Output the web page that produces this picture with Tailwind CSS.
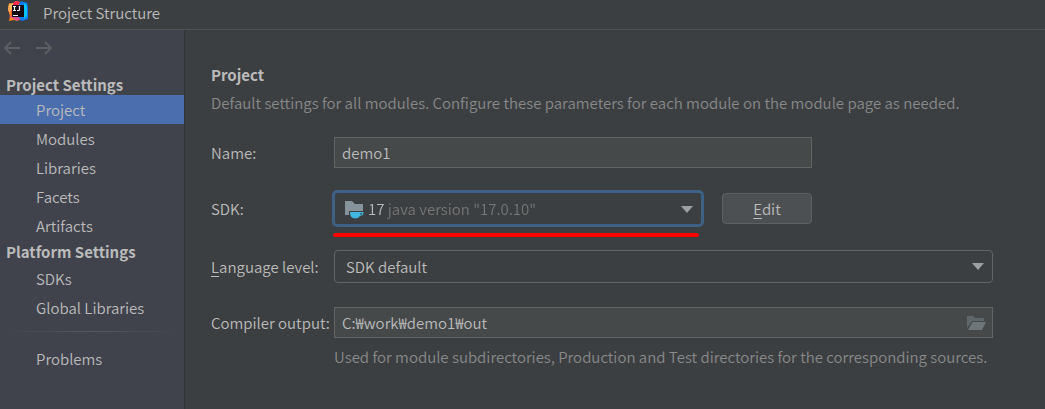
<!DOCTYPE html>
<html lang="en">
  <head>
    <meta charset="UTF-8" />
    <meta name="viewport" content="width=device-width, initial-scale=1.0" />
    <title>Project Structure</title>
    <script src="https://cdn.jsdelivr.net/npm/@tailwindcss/browser@4"></script>
  </head>
  <body
    class="flex flex-col min-h-screen bg-[#3c3f41] text-[#bbbbbb] text-[15px] leading-5 font-[350] font-['Noto_Sans_CJK_KR','Noto_Sans',sans-serif]"
  >
    <header class="flex items-center gap-[15px] h-[30px] pl-2 pb-1 border-b border-[#4f5254]">
      <svg class="w-5 h-5 shrink-0 -mt-1" viewBox="0 0 20 20" aria-hidden="true">
        <path d="M1 2 4 3 8 0l4 1v17l-3 2-3-1-5 1 1-5-2-6z" fill="#fc801d" />
        <path d="M6 1 9 0l4 2-5 3-5 7-2-2z" fill="#fe2857" />
        <path d="M1 3 5 2v5l-3 5-2-4z" fill="#fdb35a" />
        <path d="M11 3 13 0l6 2 1 4v12l-6 2-5-3z" fill="#087cfa" />
        <path d="m15 4 2-2 2 3v10l-3 3z" fill="#07c3f2" />
        <path d="m1 15 6-1 6 4-4 2z" fill="#dd4f8e" />
        <path d="M4 4h12v12H4z" fill="#150b12" />
        <path d="M5 5.500h3M6.500 5.500v4M5 9.500h3M11.500 5v3.500q0 1-1 1H9M5 14.500h5" fill="none" stroke="#fff" stroke-width="1.200" />
      </svg>
      <h1>Project Structure</h1>
    </header>

    <div class="flex flex-1">
      <aside class="w-[185px] shrink-0 bg-[#40434c] border-r border-[#323436]">
        <div class="flex gap-4 h-9 pl-[3px] items-center">
          <button type="button" aria-label="Back">
            <svg class="w-[17px] h-4" viewBox="0 0 17 16" fill="none" stroke="#5c5e61" stroke-width="2">
              <path d="M17 8H2M8 2 2 8l6 6" />
            </svg>
          </button>
          <button type="button" aria-label="Forward">
            <svg class="w-[17px] h-4" viewBox="0 0 17 16" fill="none" stroke="#5c5e61" stroke-width="2">
              <path d="M0 8h15M9 2l6 6-6 6" />
            </svg>
          </button>
        </div>
        <nav class="pt-[9px]">
          <h2 class="h-5 pl-[6px] font-bold">Project Settings</h2>
          <a href="#" class="flex items-center h-[29px] pl-9 bg-[#4b6eaf]">Project</a>
          <a href="#" class="flex items-center h-[29px] pl-9">Modules</a>
          <a href="#" class="flex items-center h-[29px] pl-9">Libraries</a>
          <a href="#" class="flex items-center h-[29px] pl-9">Facets</a>
          <a href="#" class="flex items-center h-[29px] pl-9">Artifacts</a>
          <h2 class="flex items-center h-6 pl-[6px] font-bold">Platform Settings</h2>
          <a href="#" class="flex items-center h-[29px] pl-9">SDKs</a>
          <a href="#" class="flex items-center h-[29px] pl-9">Global Libraries</a>
          <div class="h-px mt-[9px] mb-3 mx-1 bg-linear-to-r from-transparent via-[#55575b] to-transparent"></div>
          <a href="#" class="flex items-center h-[29px] pl-9">Problems</a>
        </nav>
      </aside>

      <main class="flex-1 min-w-0 pt-[35px] pl-[26px] pr-[52px]">
        <h2 class="font-bold">Project</h2>
        <p class="mt-2 text-[#87898a] whitespace-nowrap">
          Default settings for all modules. Configure these parameters for each module on the module page as needed.
        </p>

        <form class="grid grid-cols-[123px_minmax(0,1fr)] items-center mt-6">
          <label for="name">Name:</label>
          <input
            id="name"
            type="text"
            value="demo1"
            class="w-[478px] h-[31px] px-[7px] bg-[#45494a] border border-[#646464] outline-none"
          />

          <label for="sdk" class="mt-[22px]">SDK:</label>
          <div class="flex items-center gap-[18px] h-[37px] mt-[22px] -ml-[2px]">
            <div class="relative w-[372px] h-[37px] border-[3px] border-[#3d6185] rounded-[5px]">
              <select
                id="sdk"
                class="appearance-none w-full h-full pl-[33px] pr-8 outline-none text-transparent bg-clip-text bg-linear-to-r from-[#bbbbbb] from-[51px] to-[#777777] to-[51px]"
              >
                <option>17 java version "17.0.10"</option>
              </select>
              <svg class="absolute left-[10px] top-2 w-[19px] h-[18px] pointer-events-none" viewBox="0 0 19 18">
                <path d="M0 0h7l3 3h8v7H4v4H0z" fill="#87939a" />
                <path d="M5 11h13.500q.500 3.500-3.500 4-1.500 2.500-5 2.500-5 0-5-6.500z" fill="#40b6e0" />
                <path d="M15.500 12.300h1.800q-.300 1.500-2 1.500z" fill="#3c3f41" />
              </svg>
              <svg class="absolute right-2 top-[13px] w-3 h-[7px] pointer-events-none" viewBox="0 0 12 7">
                <path d="M0 0h12L6 7z" fill="#9da0a2" />
              </svg>
              <!-- marker stroke under the SDK -->
              <div class="absolute -left-[2px] top-10 w-[366px] h-1 rounded-full bg-[#ff0000]"></div>
            </div>
            <button type="button" class="w-[90px] h-[31px] bg-[#4c5052] border border-[#5e6060] rounded-[4px]">
              <span class="underline underline-offset-3">E</span>dit
            </button>
          </div>

          <label for="level" class="mt-[23px]"><span class="underline underline-offset-3">L</span>anguage level:</label>
          <div class="relative mt-[23px]">
            <select
              id="level"
              class="block appearance-none w-full h-[33px] px-[11px] bg-[#3c3f41] border border-[#646464] rounded-[4px] outline-none"
            >
              <option>SDK default</option>
            </select>
            <svg class="absolute right-[9px] top-[13px] w-3 h-[7px] pointer-events-none" viewBox="0 0 12 7">
              <path d="M0 0h12L6 7z" fill="#9da0a2" />
            </svg>
          </div>

          <label for="output" class="mt-6">Compiler output:</label>
          <div class="relative mt-6">
            <input
              id="output"
              type="text"
              value="C:₩work₩demo1₩out"
              class="block w-full h-[31px] pl-[7px] pr-9 bg-[#45494a] border border-[#646464] outline-none"
            />
            <button type="button" aria-label="Browse" class="absolute right-[7px] top-[9px]">
              <svg class="block w-[19px] h-[14px]" viewBox="0 0 19 14">
                <path d="M0 0h6l2 2h9v3H5L0 12z" fill="#5f676b" />
                <path d="M5.500 6H19l-4 8H1z" fill="#6e767a" />
              </svg>
            </button>
          </div>
          <p class="col-start-2 mt-[9px] text-[#87898a] whitespace-nowrap">
            Used for module subdirectories, Production and Test directories for the corresponding sources.
          </p>
        </form>
      </main>
    </div>
  </body>
</html>
